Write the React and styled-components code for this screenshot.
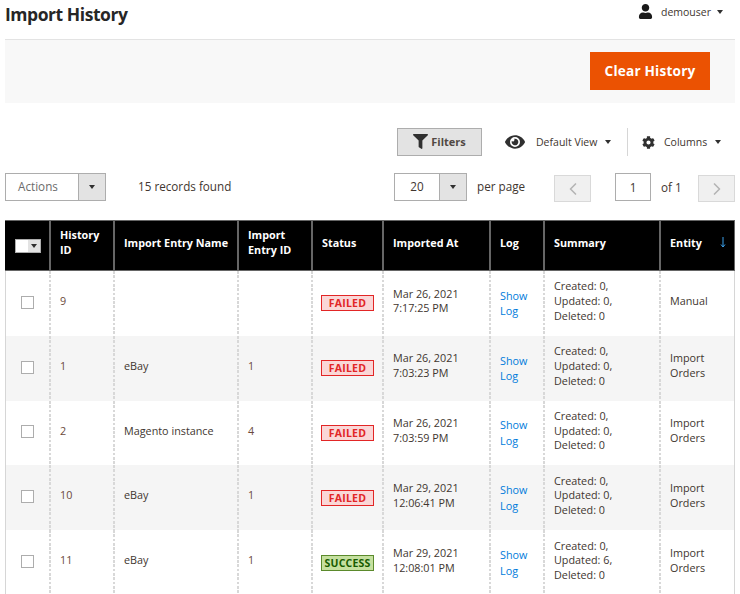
import React from "react";
import styled, { createGlobalStyle } from "styled-components";
import { FaFilter, FaEye, FaCog, FaUser } from "react-icons/fa";
import { FiChevronLeft, FiChevronRight } from "react-icons/fi";

const rows = [
  { id: "9", name: "", entry: "", status: "FAILED", date: "Mar 26, 2021", time: "7:17:25 PM", updated: 0, entity: "Manual" },
  { id: "1", name: "eBay", entry: "1", status: "FAILED", date: "Mar 26, 2021", time: "7:03:23 PM", updated: 0, entity: "Import Orders" },
  { id: "2", name: "Magento instance", entry: "4", status: "FAILED", date: "Mar 26, 2021", time: "7:03:59 PM", updated: 0, entity: "Import Orders" },
  { id: "10", name: "eBay", entry: "1", status: "FAILED", date: "Mar 29, 2021", time: "12:06:41 PM", updated: 0, entity: "Import Orders" },
  { id: "11", name: "eBay", entry: "1", status: "SUCCESS", date: "Mar 29, 2021", time: "12:08:01 PM", updated: 6, entity: "Import Orders" },
];

const columns = [44, 64, 124, 74, 71, 107, 54, 116, 76];

export default function App() {
  return (
    <>
      <GlobalStyle />
      <Page>
        <TopBar>
          <Title>Import History</Title>
          <UserMenu>
            <FaUser size={15} color="#1a1a1a" />
            <UserName>demouser</UserName>
            <Caret />
          </UserMenu>
        </TopBar>

        <ActionPanel>
          <ClearButton>Clear History</ClearButton>
        </ActionPanel>

        <ControlsRow>
          <FilterButton>
            <FaFilter size={15} color="#303030" />
            Filters
          </FilterButton>
          <ViewSwitch>
            <FaEye size={20} color="#303030" />
            <SwitchLabel>Default View</SwitchLabel>
            <Caret />
          </ViewSwitch>
          <ColumnsSwitch>
            <FaCog size={13} color="#303030" />
            <SwitchLabel $tight>Columns</SwitchLabel>
            <Caret />
          </ColumnsSwitch>
        </ControlsRow>

        <PagerRow>
          <SelectBox $width={101}>
            <SelectValue $align="left">Actions</SelectValue>
            <SelectArrow><Caret /></SelectArrow>
          </SelectBox>
          <Records>15 records found</Records>
          <SelectBox $width={73}>
            <SelectValue $dark>20</SelectValue>
            <SelectArrow><Caret /></SelectArrow>
          </SelectBox>
          <PerPage>per page</PerPage>
          <PageButton>
            <FiChevronLeft size={20} color="#b5b5b5" />
          </PageButton>
          <PageInput>1</PageInput>
          <PageCount>of 1</PageCount>
          <PageButton>
            <FiChevronRight size={20} color="#b5b5b5" />
          </PageButton>
        </PagerRow>

        <Grid>
          <colgroup>
            {columns.map((w, i) => (
              <col key={i} style={{ width: w }} />
            ))}
          </colgroup>
          <thead>
            <tr>
              <Th>
                <HeadSelect>
                  <HeadSelectBox />
                  <HeadSelectArrow><Caret /></HeadSelectArrow>
                </HeadSelect>
              </Th>
              <Th>History ID</Th>
              <Th>Import Entry Name</Th>
              <Th>Import Entry ID</Th>
              <Th>Status</Th>
              <Th>Imported At</Th>
              <Th>Log</Th>
              <Th>Summary</Th>
              <Th>
                <EntityHead>
                  Entity
                  <svg width="6" height="11" viewBox="0 0 6 11">
                    <path d="M3 0v10M1 7.5 3 10l2-2.5" fill="none" stroke="#3a9fe8" strokeWidth="1" />
                  </svg>
                </EntityHead>
              </Th>
            </tr>
          </thead>
          <tbody>
            {rows.map((r, i) => (
              <Row key={r.id} $alt={i % 2 === 1}>
                <Td><Check /></Td>
                <Td $num>{r.id}</Td>
                <Td>{r.name}</Td>
                <Td $num>{r.entry}</Td>
                <Td><Badge $ok={r.status === "SUCCESS"}>{r.status}</Badge></Td>
                <Td>{r.date}<br />{r.time}</Td>
                <Td><LogLink>Show Log</LogLink></Td>
                <Td>Created: 0,<br />Updated: {r.updated},<br />Deleted: 0</Td>
                <Td>{r.entity}</Td>
              </Row>
            ))}
          </tbody>
        </Grid>
      </Page>
    </>
  );
}

const GlobalStyle = createGlobalStyle`
  html, body {
    margin: 0;
    height: 594px;
    overflow: hidden;
    background: #fff;
  }
  body {
    font-family: "Open Sans", "Liberation Sans", sans-serif;
    color: #303030;
  }
  * {
    box-sizing: border-box;
  }
`;

const Page = styled.div`
  width: 740px;
  height: 594px;
  padding: 0 5px;
  overflow: hidden;
`;

const TopBar = styled.div`
  display: flex;
  justify-content: space-between;
  height: 40px;
  border-bottom: 1px solid #e3e3e3;
`;

const Title = styled.h1`
  margin: 0;
  font-size: 17.5px;
  line-height: 29px;
  font-weight: 700;
  letter-spacing: -0.45px;
  color: #262626;
`;

const UserMenu = styled.div`
  display: flex;
  align-items: center;
  height: 23px;
  margin-right: 12px;
`;

const UserName = styled.span`
  font-size: 10.5px;
  margin: 0 6px 0 8px;
  color: #41362f;
`;

const Caret = styled.span`
  display: inline-block;
  width: 0;
  height: 0;
  border-left: 3px solid transparent;
  border-right: 3px solid transparent;
  border-top: 4px solid #303030;
`;

const ActionPanel = styled.div`
  display: flex;
  justify-content: flex-end;
  align-items: flex-start;
  height: 63px;
  padding: 12px 25px 0 0;
  background: #f8f8f8;
`;

const ClearButton = styled.button`
  width: 120px;
  height: 38px;
  border: 0;
  padding: 0 0 2px;
  background: #eb5202;
  color: #fff;
  font-family: inherit;
  font-size: 13.6px;
  font-weight: 700;
  letter-spacing: 0.2px;
`;

const ControlsRow = styled.div`
  display: flex;
  align-items: center;
  height: 28px;
  margin-top: 25px;
`;

const FilterButton = styled.button`
  display: flex;
  align-items: center;
  justify-content: center;
  gap: 3px;
  width: 85px;
  height: 28px;
  margin-left: 392px;
  padding: 0 0 1px;
  border: 1px solid #adadad;
  background: #e3e3e3;
  color: #514943;
  font-family: inherit;
  font-size: 11px;
  font-weight: 700;
`;

const ViewSwitch = styled.div`
  display: flex;
  align-items: center;
  width: 123px;
  height: 28px;
  margin-left: 23px;
  border-right: 1px solid #d6d6d6;
`;

const SwitchLabel = styled.span`
  font-size: 10.5px;
  color: #41362f;
  margin: 0 8px 0 ${(p) => (p.$tight ? "9px" : "11px")};
`;

const ColumnsSwitch = styled.div`
  display: flex;
  align-items: center;
  margin-left: 14px;
`;

const PagerRow = styled.div`
  display: flex;
  align-items: flex-start;
  height: 47px;
  margin-top: 17px;
`;

const SelectBox = styled.div`
  display: flex;
  width: ${(p) => p.$width}px;
  height: 28px;
  border: 1px solid #adadad;
`;

const SelectValue = styled.div`
  flex: 1;
  font-size: 11.7px;
  line-height: 25px;
  color: ${(p) => (p.$dark ? "#41362f" : "#6b6b6b")};
  text-align: ${(p) => p.$align || "center"};
  padding-left: ${(p) => (p.$align ? "12px" : "0")};
`;

const SelectArrow = styled.div`
  display: flex;
  align-items: center;
  justify-content: center;
  width: 27px;
  border-left: 1px solid #adadad;
  background: #e3e3e3;
`;

const Records = styled.div`
  width: 256px;
  margin-left: 32px;
  font-size: 11.7px;
  line-height: 26px;
  color: #41362f;
`;

const PerPage = styled.div`
  width: 77px;
  margin-left: 10px;
  font-size: 11.7px;
  line-height: 27px;
  color: #41362f;
`;

const PageButton = styled.div`
  display: flex;
  align-items: center;
  justify-content: center;
  width: 37px;
  height: 27px;
  margin-top: 2px;
  border: 1px solid #d9d9d9;
  background: #f0f0f0;
`;

const PageInput = styled.div`
  width: 36px;
  height: 28px;
  margin-left: 24px;
  border: 1px solid #adadad;
  font-size: 11.7px;
  line-height: 26px;
  text-align: center;
  color: #41362f;
`;

const PageCount = styled.div`
  width: 47px;
  padding-left: 10px;
  font-size: 11.7px;
  line-height: 28px;
  color: #41362f;
`;

const Grid = styled.table`
  width: 730px;
  table-layout: fixed;
  border-collapse: separate;
  border-spacing: 0;
`;

const Th = styled.th`
  height: 51px;
  padding: 0 4px 5px 9px;
  background: #000;
  border-top: 1px solid #666;
  border-bottom: 1px solid #666;
  border-left: 2px solid #666;
  color: #fff;
  font-size: 10.8px;
  line-height: 14.7px;
  font-weight: 700;
  text-align: left;

  &:first-child {
    border-left: 0;
    padding: 0 0 0 10px;
  }
  &:last-child {
    border-right: 1px solid #666;
    padding-right: 8px;
  }
`;

const EntityHead = styled.div`
  display: flex;
  justify-content: space-between;
  align-items: center;
`;

const HeadSelect = styled.div`
  display: flex;
  width: 26px;
  height: 14px;
  border: 1px solid #adadad;
`;

const HeadSelectBox = styled.div`
  flex: 1;
  background: #fff;
`;

const HeadSelectArrow = styled.div`
  display: flex;
  align-items: center;
  justify-content: center;
  width: 12px;
  background: #e3e3e3;
`;

const Row = styled.tr`
  background: ${(p) => (p.$alt ? "#f5f5f5" : "#fff")};
`;

const Td = styled.td`
  height: 64.8px;
  padding: 8px 9px 12px 11px;
  /* the dashes in the reference are tighter than a border-style: dashed gives */
  background: repeating-linear-gradient(to bottom, #d8d8d8 0 2.7px, transparent 2.7px 4.3px) left top / 2px 100% no-repeat;
  font-size: 10.8px;
  line-height: 14.7px;
  color: ${(p) => (p.$num ? "#6b4a3c" : "#41362f")};
  vertical-align: middle;

  &:first-child {
    background: none;
    border-left: 1px solid #d6d6d6;
    padding: 8px 15px 10px;
  }
  &:last-child {
    border-right: 1px solid #d6d6d6;
  }
`;

const Check = styled.div`
  width: 13px;
  height: 13px;
  border: 1px solid #adadad;
  background: #fff;
`;

const Badge = styled.div`
  width: 53px;
  height: 16px;
  margin: 4px 0 0 -1px;
  border: 1px solid ${(p) => (p.$ok ? "#5b8a2c" : "#e22626")};
  background: ${(p) => (p.$ok ? "#c5e09f" : "#fad7d7")};
  color: ${(p) => (p.$ok ? "#185b00" : "#e22626")};
  font-size: 10.5px;
  font-weight: 700;
  line-height: 14px;
  text-align: center;
  letter-spacing: 0.2px;
`;

const LogLink = styled.a`
  color: #007bdb;
  display: block;
  padding-top: 4px;
  line-height: 15.5px;
`;
